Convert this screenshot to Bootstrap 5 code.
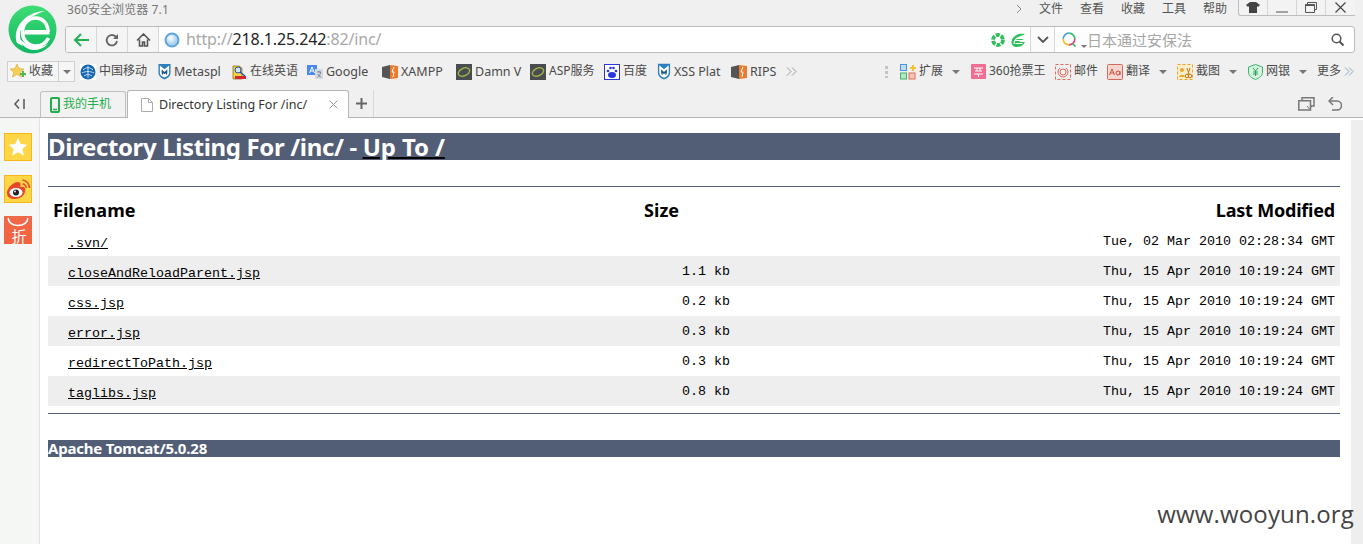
<!DOCTYPE html>
<html lang="zh">
<head>
<meta charset="utf-8">
<title>Directory Listing For /inc/</title>
<link href="https://cdn.jsdelivr.net/npm/bootstrap@5.3.0/dist/css/bootstrap.min.css" rel="stylesheet">
<style>
html,body{height:544px;overflow:hidden;background:#fff}
body{font-family:"Noto Sans","Noto Sans CJK SC",sans-serif;font-size:12px;color:#444;line-height:1.2}
svg{display:block;flex:none}
.chrome{background:#f0f0f0;height:118px;border-bottom:1px solid #b5b5b5}
.logo-col{width:65px;height:53px;padding:5px 0 0 8px}
.title-bar{height:26px}
.title-text{font-size:12px;color:#777;padding-top:3px;margin-left:2px;letter-spacing:.1px}
.menu-items{gap:17px;color:#555;padding-top:2px;margin-right:11px}
.win-box{width:117px;height:16px;border:solid #bdbdbd;border-width:0 0 1px 1px;border-bottom-left-radius:3px;margin-right:8px;background:#f3f3f3}
.win-cell{width:29px;border-right:1px solid #d6d6d6}
.win-cell:last-child{border-right:0}
.addr-box{height:27px;margin-right:8px;border:1px solid #bbb;border-radius:3px;background:#fff;overflow:hidden}
.nav-cell{width:31px;background:#f5f5f5;border-right:1px solid #d8d8d8}
.url-field{gap:6px;padding:0 5px;min-width:0}
.url-text{font-size:16px;color:#a8a8a8;letter-spacing:-.13px}
.url-text b{font-weight:400;color:#222}
.drop-cell{width:25px;border-left:1px solid #d8d8d8;border-right:1px solid #d8d8d8;background:#fbfbfb}
.search-field{width:299px;padding:0 10px 0 7px}
.search-ph{font-size:15px;color:#a6a6a6}
.bm-row{height:37px;padding-top:8px;padding-left:7px}
.bm-main{height:21px;width:68px;border:1px solid #cfcfcf;background:#f6f6f6;margin-right:5px;padding-left:2px}
.bm-split{width:16px;height:19px;border-left:1px solid #cfcfcf;margin-left:auto}
.bm{flex:none;display:flex;align-items:center;gap:3px;white-space:nowrap;color:#4a4a4a;font-size:12px;height:21px}
.lat{font-size:12.5px}
.w53{width:53px}.w55{width:55px}.w73{width:73px}.w74{width:74px}.w75{width:75px}.w76{width:76px}.w78{width:78px}
.w99{width:99px}.w15{width:15px}.w52{width:52px}.w69{width:69px}.w70{width:70px}.w71{width:71px}.w84{width:84px}
.caret-d{width:0;height:0;border:4px solid transparent;border-top:4px solid #777;border-bottom:0;margin-left:auto;margin-right:11px}
.w69 .caret-d,.w70 .caret-d{margin-right:10px}
.dots{width:3px;height:13px;background:radial-gradient(circle,#c4c4c4 1.5px,transparent 1.6px) 0 0/3px 5px}
.tab-row{height:27px}
.tab-back{width:40px}
.tab-green{width:86px;height:26px;margin-top:1px;border:1px solid #c0c0c0;border-bottom:0;border-radius:3px 3px 0 0;color:#1fae4b;padding-left:9px;gap:3px;background:#f2f2f2;font-size:12px}
.tab-on{width:222px;height:28px;margin-left:1px;border:1px solid #b5b5b5;border-bottom:0;border-radius:3px 3px 0 0;background:#fff;padding-left:13px;gap:6px;color:#333;font-size:12.5px;position:relative}
.tab-close{margin-left:auto;margin-right:10px}
.tab-plus{width:25px;border-right:1px solid #d8d8d8;height:27px}
.tab-tools{gap:13px;margin-left:auto;margin-right:21px}
.page-wrap{height:426px;position:relative}
.side-col{width:40px;background:#f5f7f5;border-right:1px solid #e2e2e2;padding:15px 0 0 4px;gap:14px}
.side-btn{width:28px;height:28px}
.side-bag{margin-top:-1px}
.list-col{width:1292px;margin-left:8px;padding-top:15px;color:#000}
.scroll-col{width:12px;margin:2px 0 0 auto;background:#eee}
.dir-h1{font-family:"Noto Sans",sans-serif;font-size:24px;line-height:27px;height:27px;font-weight:700;color:#fff;background:#525d76;margin:0;letter-spacing:-.36px;white-space:nowrap}
.dir-h1 a{color:#fff;text-decoration-color:#000;text-decoration-thickness:2px;letter-spacing:-.1px}
.rule-a{height:1px;background:#525d76;margin:26px 0 0}
.rule-b{height:1px;background:#525d76;margin:7px 0 0}
.dir-table{width:100%;table-layout:fixed;border-collapse:collapse}
.dir-table th{font-family:"Noto Sans",sans-serif;font-size:18px;font-weight:700;height:41px;padding:6px 5px 0;color:#000;letter-spacing:.05px}
.dir-table th:last-child{letter-spacing:-.2px}
.dir-table td{font-family:"Liberation Mono",monospace;font-size:13.33px;height:30px;padding:2px 5px 0}
.dir-table tr.tall td{height:28px;padding-top:0}
.dir-table tr.zebra td{background:#eee}
.dir-table a{color:#000;margin-left:15px;display:inline-block;padding-top:4px}
.dir-table tr.tall a{padding-top:4px}
.c1{width:591px}.c2{width:96px}
.foot-bar{font-family:"Noto Sans",sans-serif;font-size:15px;font-weight:700;line-height:17px;height:17px;color:#fff;background:#525d76;margin:26px 0 0;letter-spacing:-.2px}
.mark-text{position:absolute;right:9px;bottom:18px;font-family:"Open Sans",sans-serif;font-size:24px;color:#444;line-height:1;letter-spacing:.15px}
</style>
</head>
<body>
<svg width="0" height="0" class="position-absolute">
<defs>
<symbol id="msf" viewBox="0 0 14 18"><path d="M.5.8h13V10c0 4-3 6-6.500 7.500C3.500 16 .5 14 .5 10z" fill="#2c7fba"/><path d="M2 2.500 7 6.500l5-4v8c0 2.500-2.500 4-5 5-2.500-1-5-2.500-5-5z" fill="#fff"/><path d="M4 6.500 7 9.500l3-3v5L8.500 13V10.500L7 12 5.500 10.500V13L4 11.500z" fill="#1f5a85"/></symbol>
<symbol id="xamp" viewBox="0 0 16 16"><path d="M0 3l8-2v14l-8-2z" fill="#555"/><path d="M8 1l8 1v12l-8 1z" fill="#ee7a2b"/><path d="M12 3 10 8h2l-1 5" stroke="#fff" fill="none"/></symbol>
<symbol id="dvwa" viewBox="0 0 16 16"><rect width="16" height="16" fill="#4a4d4f"/><ellipse cx="8" cy="8" rx="6" ry="3.800" fill="none" stroke="#a4b54c" stroke-width="1.300" transform="rotate(-25 8 8)"/></symbol>
<symbol id="car" viewBox="0 0 8 4"><path d="M0 0h8L4 4z" fill="#777"/></symbol>
</defs>
</svg>

<header class="chrome">
  <div class="d-flex">
    <div class="logo-col">
      <svg width="49" height="49" viewBox="0 0 49 49"><defs><linearGradient id="lg" x1="0" y1="0" x2="0" y2="1"><stop offset="0" stop-color="#3fdc74"/><stop offset="1" stop-color="#12b862"/></linearGradient></defs><circle cx="24.500" cy="24.500" r="24" fill="url(#lg)"/><path d="M17 25h24.500v4.500H15z" fill="#fff"/><path d="M40 27C40 18 34 13 28 13 20 13 14.500 19 14.500 27c0 8 6 14 13 14 5 0 10-2 13-8" fill="none" stroke="#fff" stroke-width="3.600"/><path d="M9 38C4 24 16 7 37 6 24 10 12 19 12 30c0 4 1 8 3 11z" fill="#fff"/><path d="M11 33c2 7 8 12 15 12 5 0 10-2 14-6-8 4-17 4-22 0-3-2-5-4-7-6z" fill="#fff"/></svg>
    </div>
    <div class="flex-grow-1 d-flex flex-column">
      <div class="title-bar d-flex align-items-start">
        <div class="title-text">360安全浏览器 7.1</div>
        <div class="ms-auto d-flex menu-items align-items-center">
          <svg width="6" height="10" viewBox="0 0 6 10"><path d="M1 1l4 4-4 4" fill="none" stroke="#888"/></svg>
          <span>文件</span><span>查看</span><span>收藏</span><span>工具</span><span>帮助</span>
        </div>
        <div class="win-box d-flex">
          <div class="win-cell d-flex align-items-center justify-content-center"><svg width="14" height="11" viewBox="0 0 14 11"><path d="M4 0h6l4 3-2 2-1-1v7H3V4L2 5 0 3z" fill="#444"/></svg></div>
          <div class="win-cell d-flex align-items-center justify-content-center"><svg width="12" height="12" viewBox="0 0 12 12"><path d="M0 10h12" stroke="#555"/></svg></div>
          <div class="win-cell d-flex align-items-center justify-content-center"><svg width="12" height="11" viewBox="0 0 12 11"><path d="M.5 2.500h9v8h-9zM2.500 2V.5h9v7H10" fill="none" stroke="#555"/><path d="M.5 3h9" stroke="#555" stroke-width="2"/></svg></div>
          <div class="win-cell d-flex align-items-center justify-content-center"><svg width="11" height="11" viewBox="0 0 11 11"><path d="M.5.5l10 10M10.500.5l-10 10" stroke="#444" stroke-width="1.200"/></svg></div>
        </div>
      </div>
      <div class="addr-box d-flex">
        <div class="nav-cell d-flex align-items-center justify-content-center"><svg width="16" height="14" viewBox="0 0 16 14"><path d="M8 1 2 7l6 6M2 7h14" fill="none" stroke="#1fb254" stroke-width="2"/></svg></div>
        <div class="nav-cell d-flex align-items-center justify-content-center"><svg width="14" height="14" viewBox="0 0 14 14"><path d="M12 8a5.200 5.200 0 1 1-1.500-4.500L12 5" fill="none" stroke="#666" stroke-width="1.800"/><path d="M13 1v5H8z" fill="#666"/></svg></div>
        <div class="nav-cell d-flex align-items-center justify-content-center"><svg width="15" height="14" viewBox="0 0 15 14"><path d="M1 7.500 7.500 1 14 7.500M3.500 6.500v6.500h3V9h2v4h3V6.500" fill="none" stroke="#555" stroke-width="1.600"/></svg></div>
        <div class="url-field flex-grow-1 d-flex align-items-center">
          <svg width="16" height="16" viewBox="0 0 16 16"><defs><radialGradient id="gb" cx=".4" cy=".35"><stop offset="0" stop-color="#fff"/><stop offset="1" stop-color="#a6d0f0"/></radialGradient></defs><circle cx="8" cy="8" r="6.500" fill="url(#gb)" stroke="#5ea4dc" stroke-width="2"/></svg>
          <span class="url-text">http://<b>218.1.25.242</b>:82/inc/</span>
          <svg class="ms-auto" width="14" height="14" viewBox="0 0 14 14"><circle cx="7" cy="7" r="5" fill="none" stroke="#2fc05c" stroke-width="3.800" stroke-dasharray="4 1.200"/></svg>
          <svg width="14" height="14" viewBox="0 0 14 14"><path d="M14 1C7 0 1 3 .5 9c-.3 3 2 5 5 5 4 0 7-2 8.500-5H8l5-3H4" fill="#2fc05c"/><path d="M3 11c0-5 4-7 9-8M4 7.500h9M4.500 10.500h7" fill="none" stroke="#fff" stroke-width="1.100"/></svg>
        </div>
        <div class="drop-cell d-flex align-items-center justify-content-center"><svg width="12" height="7" viewBox="0 0 12 7"><path d="M1 1l5 5 5-5" fill="none" stroke="#555" stroke-width="1.800"/></svg></div>
        <div class="search-field d-flex align-items-center">
          <svg width="15" height="16" viewBox="0 0 15 16"><circle cx="7" cy="7" r="5.800" fill="none" stroke="#e5408b" stroke-width="1.700" stroke-dasharray="9 28"/><circle cx="7" cy="7" r="5.800" fill="none" stroke="#f2c01e" stroke-width="1.700" stroke-dasharray="9 27" stroke-dashoffset="-9"/><circle cx="7" cy="7" r="5.800" fill="none" stroke="#3fa0e8" stroke-width="1.700" stroke-dasharray="9 27" stroke-dashoffset="-18"/><circle cx="7" cy="7" r="5.800" fill="none" stroke="#2fc05c" stroke-width="1.700" stroke-dasharray="9 27" stroke-dashoffset="-27"/><path d="M10.500 11.500l3 3" stroke="#2fc05c" stroke-width="1.700"/></svg>
          <svg class="align-self-end mb-1 ms-1" width="6" height="3" viewBox="0 0 8 4"><use href="#car"/></svg>
          <span class="search-ph">日本通过安保法</span>
          <svg class="ms-auto" width="13" height="13" viewBox="0 0 13 13"><circle cx="5.500" cy="5.500" r="4.300" fill="none" stroke="#555" stroke-width="1.500"/><path d="M8.500 8.500 12.500 12.500" stroke="#555" stroke-width="2"/></svg>
        </div>
      </div>
    </div>
  </div>

  <div class="bm-row d-flex align-items-start">
    <div class="bm bm-main"><svg width="16" height="15" viewBox="0 0 16 15"><path d="M7 0l2 4.500 5 .5-3.700 3.200L11.500 13 7 10.500 2.500 13l1.200-4.800L0 5l5-.5z" fill="#f6cf57" stroke="#d9a93a" stroke-width=".6"/><path d="M10 9h2V7h2v2h2v2h-2v2h-2v-2h-2z" fill="#4fb84f"/></svg><span>收藏</span><div class="bm-split d-flex align-items-center justify-content-center"><svg width="8" height="4" viewBox="0 0 8 4"><use href="#car"/></svg></div></div>
    <a class="bm w78 text-decoration-none"><svg width="16" height="16" viewBox="0 0 16 16"><rect width="16" height="16" fill="#fff"/><circle cx="8" cy="8" r="7.500" fill="#1565b0"/><path d="M3 6c3-3 7-3 10 0M2 9c4-2 8-2 12 0M4 12c3-2 5-2 8 0M8 2v12" fill="none" stroke="#bfe0f7"/></svg>中国移动</a>
    <a class="bm w73 text-decoration-none"><svg width="13" height="17" viewBox="0 0 14 18"><use href="#msf"/></svg><span class="lat">Metaspl</span></a>
    <a class="bm w76 text-decoration-none"><svg width="16" height="16" viewBox="0 0 16 16"><path d="M2 2h6l3 2v11H2z" fill="#f7d23e" stroke="#7a6a12" stroke-width=".7"/><path d="M4 12h11v3H4z" fill="#d8262c"/><circle cx="7" cy="6" r="3" fill="#cfe7fb" stroke="#2a4fb0"/><path d="M9 8l5 4" stroke="#2a4fb0" stroke-width="1.500"/></svg>在线英语</a>
    <a class="bm w75 text-decoration-none"><svg width="16" height="16" viewBox="0 0 16 16"><path d="M0 1h10v10H0z" fill="#4a8af0"/><path d="M8 5h8v10H8z" fill="#d6d9de"/><path d="M2.500 9 5 3l2.500 6M3.500 7h3" fill="none" stroke="#fff"/><path d="M10 8h4M12 7v1M10.500 13c2-1 3-3 3-5M10.500 10c1 1.500 2 2.500 3.500 3" fill="none" stroke="#667" stroke-width=".7"/></svg><span class="lat">Google</span></a>
    <a class="bm w74 text-decoration-none"><svg width="16" height="16" viewBox="0 0 16 16"><use href="#xamp"/></svg><span class="lat">XAMPP</span></a>
    <a class="bm w74 text-decoration-none"><svg width="16" height="16" viewBox="0 0 16 16"><use href="#dvwa"/></svg><span class="lat">Damn V</span></a>
    <a class="bm w74 text-decoration-none"><svg width="16" height="16" viewBox="0 0 16 16"><use href="#dvwa"/></svg>ASP服务</a>
    <a class="bm w53 text-decoration-none"><svg width="16" height="16" viewBox="0 0 16 16"><rect x=".5" y=".5" width="15" height="15" fill="#fff" stroke="#2b35e0"/><ellipse cx="8" cy="11" rx="4" ry="3" fill="#2b35e0"/><circle cx="4" cy="7" r="1.300" fill="#2b35e0"/><circle cx="12" cy="7" r="1.300" fill="#2b35e0"/><circle cx="6.500" cy="4" r="1.300" fill="#2b35e0"/><circle cx="9.500" cy="4" r="1.300" fill="#2b35e0"/></svg>百度</a>
    <a class="bm w74 text-decoration-none"><svg width="14" height="17" viewBox="0 0 14 18"><use href="#msf"/></svg><span class="lat">XSS Plat</span></a>
    <a class="bm w55 text-decoration-none"><svg width="16" height="16" viewBox="0 0 16 16"><use href="#xamp"/></svg><span class="lat">RIPS</span></a>
    <div class="bm w99"><svg width="11" height="9" viewBox="0 0 11 9"><path d="M1 .5 5 4.500 1 8.500M6 .5l4 4-4 4" fill="none" stroke="#999"/></svg></div>
    <div class="bm w15"><div class="dots"></div></div>
    <a class="bm w71 text-decoration-none"><svg width="16" height="16" viewBox="0 0 16 16"><rect x=".5" y=".5" width="6" height="6" fill="#bcdcf5" stroke="#4b94d6"/><rect x=".5" y="9" width="6" height="6" fill="#b6e6c4" stroke="#3fb56a"/><rect x="9" y="9" width="6" height="6" fill="#f7c3bd" stroke="#e0685c"/><path d="M10 3h2V1h2v2h2v2h-2v2h-2V5h-2z" fill="#f2c33a"/></svg>扩展<span class="caret-d"></span></a>
    <a class="bm w84 text-decoration-none"><svg width="15" height="15" viewBox="0 0 15 15"><rect width="15" height="15" rx="1" fill="#f26d92"/><path d="M3 4h9M4 7h7M3 10h9M6 4v3M9 4v3M7.500 10v3" stroke="#fff"/></svg><span>360抢票王</span></a>
    <a class="bm w52 text-decoration-none"><svg width="16" height="16" viewBox="0 0 16 16"><rect x=".5" y=".5" width="15" height="15" fill="none" stroke="#e66a55" stroke-dasharray="3 2"/><circle cx="8" cy="8" r="3" fill="none" stroke="#e66a55"/><circle cx="8" cy="8" r="5" fill="none" stroke="#e66a55" stroke-dasharray="20 6"/></svg>邮件</a>
    <a class="bm w70 text-decoration-none"><svg width="16" height="16" viewBox="0 0 16 16"><rect x=".5" y=".5" width="15" height="15" rx="1" fill="#f8d6d0" stroke="#cf6b5e"/><path d="M2.500 11l2.500-6 2.500 6M3.500 9h3" fill="none" stroke="#cf4f3f"/><circle cx="11" cy="9" r="2" fill="none" stroke="#cf4f3f"/><path d="M13 7v4" stroke="#cf4f3f"/></svg><span>翻译</span><span class="caret-d"></span></a>
    <a class="bm w71 text-decoration-none"><svg width="16" height="16" viewBox="0 0 16 16"><rect x=".5" y=".5" width="15" height="15" fill="#fbeec9" stroke="#eda42b" stroke-dasharray="3 2"/><circle cx="5" cy="6" r="2" fill="#eda42b"/><path d="M2 13c1-3 5-3 6 0z" fill="#eda42b"/><circle cx="10" cy="12" r="1.800" fill="none" stroke="#c9741a"/><circle cx="13" cy="12" r="1.800" fill="none" stroke="#c9741a"/><path d="M10 4l2 6M13 4l-2 6" stroke="#c9741a"/></svg><span>截图</span><span class="caret-d"></span></a>
    <a class="bm w69 text-decoration-none"><svg width="15" height="16" viewBox="0 0 15 16"><path d="M7.500.5 14.500 3v5c0 4-3 6-7 7.500C3.500 14 .5 12 .5 8V3z" fill="#d5f3df" stroke="#39b867"/><path d="M5 4l2.500 3L10 4M7.500 7v5M5 8h5M5 10h5" fill="none" stroke="#2aa354"/></svg>网银<span class="caret-d"></span></a>
    <a class="bm text-decoration-none">更多<svg width="10" height="9" viewBox="0 0 10 9"><path d="M1 .5l4 4-4 4M5 .5l4 4-4 4" fill="none" stroke="#8fa4c4"/></svg></a>
  </div>

  <div class="tab-row d-flex align-items-start">
    <div class="tab-back d-flex align-items-center justify-content-center align-self-stretch"><svg width="12" height="10" viewBox="0 0 12 10"><path d="M5 .5 1 5l4 4.500" fill="none" stroke="#555" stroke-width="1.500"/><path d="M10 0v10" stroke="#555" stroke-width="1.500"/></svg></div>
    <div class="tab-green d-flex align-items-center"><svg width="10" height="16" viewBox="0 0 10 16"><rect x="1" y="1" width="8" height="14" rx="1" fill="none" stroke="#1fae4b" stroke-width="2"/><path d="M3 12.500h4" stroke="#1fae4b" stroke-width="1.500"/></svg><span>我的手机</span></div>
    <div class="tab-on d-flex align-items-center"><svg width="12" height="14" viewBox="0 0 12 14"><path d="M.5.5h7l4 4v9H.5zM7.500.5v4h4" fill="#fff" stroke="#aaa"/></svg><span>Directory Listing For /inc/</span><svg class="tab-close" width="9" height="9" viewBox="0 0 9 9"><path d="M.5.5l8 8M8.500.5l-8 8" stroke="#999"/></svg></div>
    <div class="tab-plus d-flex align-items-center justify-content-center"><svg width="11" height="11" viewBox="0 0 11 11"><path d="M5.500 0v11M0 5.500h11" stroke="#666" stroke-width="2"/></svg></div>
    <div class="tab-tools d-flex align-items-center align-self-stretch">
      <svg width="17" height="14" viewBox="0 0 17 14"><path d="M4 3V.8h12V9h-3M.8 3.800h11.700V13H.8z" fill="none" stroke="#777" stroke-width="1.500"/><path d="M9 9l2.500 3L14 9" fill="none" stroke="#777"/></svg>
      <svg width="14" height="14" viewBox="0 0 14 14"><path d="M1 4h8a4 4 0 0 1 0 9H4" fill="none" stroke="#777" stroke-width="1.500"/><path d="M5 0 1 4l4 4" fill="none" stroke="#777" stroke-width="1.500"/></svg>
    </div>
  </div>
</header>

<main class="page-wrap d-flex">
  <aside class="side-col d-flex flex-column flex-none">
    <svg class="side-btn" viewBox="0 0 28 28"><rect x=".5" y=".5" width="27" height="27" fill="#fed648" stroke="#f4b917"/><path d="M14 5l2.800 6 6.400.7-4.800 4.400 1.400 6.400L14 19.300l-5.800 3.200 1.400-6.400-4.800-4.400 6.400-.7z" fill="#fff"/></svg>
    <svg class="side-btn" viewBox="0 0 28 28"><rect x=".5" y=".5" width="27" height="27" fill="#fed648" stroke="#f4b917"/><path d="M3 18c0-5 6-11 11-11 3 0 3 3 2 5 4-1 6 1 5 4 0 5-6 8-10 8-5 0-8-2-8-6z" fill="#e6482c"/><ellipse cx="12" cy="17.500" rx="6.500" ry="4.500" fill="#fff"/><circle cx="12" cy="17.500" r="3" fill="#222"/><circle cx="11" cy="16.500" r=".9" fill="#fff"/><path d="M18.500 9a3.500 3.500 0 0 1 3.500 4M18.500 5a8 8 0 0 1 7 8" fill="none" stroke="#e6482c" stroke-width="1.500"/></svg>
    <svg class="side-btn side-bag" viewBox="0 0 28 28"><defs><linearGradient id="lo" x1="0" y1="0" x2="0" y2="1"><stop offset="0" stop-color="#f0694a"/><stop offset="1" stop-color="#f2633f"/></linearGradient></defs><rect width="28" height="28" fill="url(#lo)"/><path d="M4 2c1 5 5 7.500 10 7.500S23 7 24 2" fill="none" stroke="#fff" stroke-width="1.500"/><text x="15" y="25.500" text-anchor="middle" fill="#fff" font-size="15" font-family="Noto Sans CJK SC">折</text></svg>
  </aside>

  <section class="list-col">
    <h1 class="dir-h1">Directory Listing For /inc/ - <a href="#">Up To /</a></h1>
    <div class="rule-a"></div>
    <table class="dir-table">
      <colgroup><col class="c1"><col class="c2"><col></colgroup>
      <thead><tr><th class="text-start">Filename</th><th class="text-start">Size</th><th class="text-end">Last Modified</th></tr></thead>
      <tbody>
        <tr class="tall"><td><a href="#">.svn/</a></td><td></td><td class="text-end">Tue, 02 Mar 2010 02:28:34 GMT</td></tr>
        <tr class="zebra"><td><a href="#">closeAndReloadParent.jsp</a></td><td class="text-end">1.1 kb</td><td class="text-end">Thu, 15 Apr 2010 10:19:24 GMT</td></tr>
        <tr><td><a href="#">css.jsp</a></td><td class="text-end">0.2 kb</td><td class="text-end">Thu, 15 Apr 2010 10:19:24 GMT</td></tr>
        <tr class="zebra"><td><a href="#">error.jsp</a></td><td class="text-end">0.3 kb</td><td class="text-end">Thu, 15 Apr 2010 10:19:24 GMT</td></tr>
        <tr><td><a href="#">redirectToPath.jsp</a></td><td class="text-end">0.3 kb</td><td class="text-end">Thu, 15 Apr 2010 10:19:24 GMT</td></tr>
        <tr class="zebra"><td><a href="#">taglibs.jsp</a></td><td class="text-end">0.8 kb</td><td class="text-end">Thu, 15 Apr 2010 10:19:24 GMT</td></tr>
      </tbody>
    </table>
    <div class="rule-b"></div>
    <h3 class="foot-bar">Apache Tomcat/5.0.28</h3>
  </section>
  <div class="scroll-col"></div>
  <div class="mark-text">www.wooyun.org</div>
</main>
<script src="https://cdn.jsdelivr.net/npm/bootstrap@5.3.0/dist/js/bootstrap.bundle.min.js"></script>
</body>
</html>
